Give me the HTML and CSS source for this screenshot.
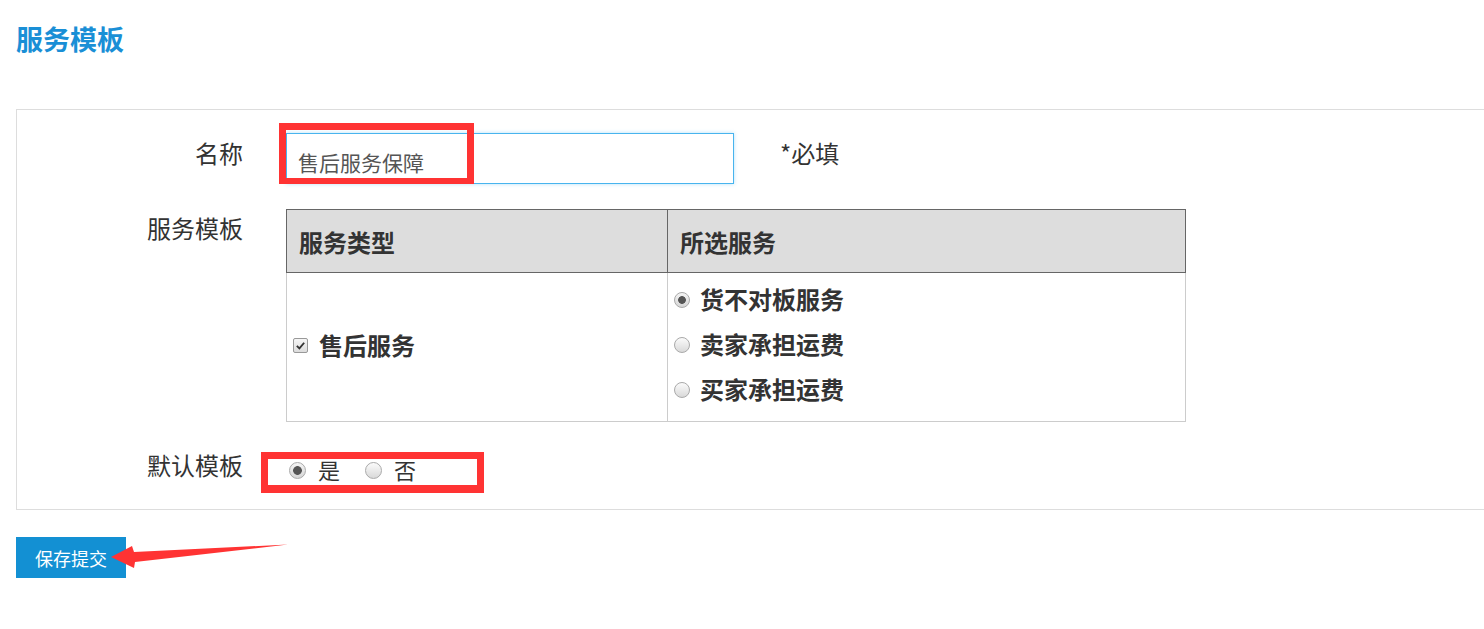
FILE: index.html
```html
<!DOCTYPE html>
<html lang="zh-CN">
<head>
    <meta charset="UTF-8">
    <meta name="viewport" content="width=device-width, initial-scale=1.0">
    <link rel="stylesheet" href="styles.css">
    <title>服务模板</title>
</head>
<body>
    <div class="page">
        <h2 class="page-title">服务模板</h2>

        <div class="panel">
            <!-- 名称 -->
            <div class="form-row row-name">
                <label class="form-label" for="tpl-name">名称</label>
                <div class="form-field">
                    <span class="input-wrap">
                        <input type="text" id="tpl-name" class="text-input" value="售后服务保障">
                        <span class="mark mark-input"></span>
                    </span>
                    <span class="required">*必填</span>
                </div>
            </div>

            <!-- 服务模板 -->
            <div class="form-row row-table">
                <label class="form-label">服务模板</label>
                <div class="form-field">
                    <table class="service-table">
                        <thead>
                            <tr>
                                <th class="col-type">服务类型</th>
                                <th class="col-select">所选服务</th>
                            </tr>
                        </thead>
                        <tbody>
                            <tr>
                                <td class="type-cell">
                                    <span class="check-line">
                                        <span class="checkbox checked">
                                            <svg viewBox="0 0 12 12" width="11" height="11"><path d="M2 6.5 L4.8 9.2 L10 3" fill="none" stroke="#333" stroke-width="2"/></svg>
                                        </span>
                                        售后服务
                                    </span>
                                </td>
                                <td class="select-cell">
                                    <div class="option"><span class="radio checked"></span>货不对板服务</div>
                                    <div class="option"><span class="radio"></span>卖家承担运费</div>
                                    <div class="option"><span class="radio"></span>买家承担运费</div>
                                </td>
                            </tr>
                        </tbody>
                    </table>
                </div>
            </div>

            <!-- 默认模板 -->
            <div class="form-row row-default">
                <label class="form-label">默认模板</label>
                <div class="form-field">
                    <div class="default-group">
                        <span class="radio radio-lg checked"></span><span class="radio-text">是</span>
                        <span class="radio radio-lg no-radio"></span><span class="radio-text">否</span>
                    </div>
                </div>
            </div>
        </div>

        <div class="actions">
            <button class="btn-submit">保存提交</button>
            <svg class="arrow" width="300" height="45" viewBox="0 0 300 45">
                <polygon points="95,20 116,9 118,15 272,7.5 119,25 118,31" fill="#f33"/>
            </svg>
        </div>
    </div>
</body>
</html>
```

FILE: styles.css
```css
/* Global */
body {
    margin: 0;
    font-family: "Microsoft YaHei", "Noto Sans CJK SC", sans-serif;
    color: #333;
    background-color: #fff;
}

.page {
    padding-left: 16px;
}

.page-title {
    margin: 0;
    padding-top: 19px;
    font-size: 27px;
    line-height: 40px;
    font-weight: bold;
    color: #1a8fd6;
}

/* Panel */
.panel {
    margin-top: 50px;
    border: 1px solid #ddd;
    border-right: none;
    padding: 23px 0 16px;
}

.form-row {
    display: flex;
    column-gap: 43px;
}

.form-row + .form-row {
    margin-top: 25px;
}

.form-row.row-default {
    margin-top: 30px;
}

.form-label {
    width: 226px;
    flex-shrink: 0;
    text-align: right;
    font-size: 24px;
    line-height: 30px;
    padding-top: 4px;
}

.row-name .form-label {
    padding-top: 5px;
}

.row-default .form-label {
    padding-top: 0;
    margin-top: -2px;
}

.form-field {
    display: flex;
    align-items: flex-start;
}

/* Name input */
.input-wrap {
    position: relative;
    display: block;
}

.text-input {
    display: block;
    width: 448px;
    height: 51px;
    box-sizing: border-box;
    padding: 6px 11px 0;
    font-family: inherit;
    font-size: 21px;
    color: #555;
    border: 1px solid #48b4ee;
    box-shadow: 0 0 4px rgba(72, 180, 238, 0.4);
    outline: none;
}

.mark {
    position: absolute;
    box-sizing: border-box;
    border: 7px solid #f33;
    border-bottom-width: 6px;
}

.mark-input {
    left: -7px;
    top: -10px;
    width: 195px;
    height: 61px;
}

.required {
    margin-left: 46px;
    padding-top: 5px;
    font-size: 24px;
    line-height: 30px;
}

/* Service table */
.service-table {
    width: 900px;
    border-collapse: collapse;
    font-size: 24px;
    font-weight: bold;
}

.service-table th {
    height: 62px;
    padding: 0 12px;
    text-align: left;
    background-color: #ddd;
    border: 1px solid #666;
}

.service-table .col-type {
    width: 356px;
}

.service-table td {
    border: 1px solid #ccc;
    vertical-align: middle;
}

.type-cell {
    padding: 0 6px 6px;
}

.check-line {
    display: flex;
    align-items: center;
    gap: 11px;
}

.checkbox {
    display: inline-flex;
    align-items: center;
    justify-content: center;
    width: 15px;
    height: 15px;
    margin-top: 3px;
    box-sizing: border-box;
    border: 1px solid #999;
    border-radius: 2px;
    background: linear-gradient(#f6f6f6, #dcdcdc);
}

.select-cell {
    padding: 3px 6px 10px;
}

.option {
    display: flex;
    align-items: center;
    gap: 10px;
    line-height: 45px;
}

.radio {
    display: inline-block;
    flex-shrink: 0;
    width: 16px;
    height: 16px;
    margin-top: 2px;
    box-sizing: border-box;
    border: 1px solid #aaa;
    border-radius: 50%;
    background: linear-gradient(#fbfbfb, #d9d9d9);
}

.radio.checked {
    background: radial-gradient(circle, #555 0 3.5px, transparent 4.2px), linear-gradient(#f4f4f4, #d6d6d6);
}

/* Default group */
.default-group {
    display: flex;
    align-items: center;
    margin-left: -25px;
    width: 223px;
    height: 41px;
    box-sizing: border-box;
    border: 7px solid #f33;
    border-bottom-width: 8px;
    padding: 0 0 6px 21px;
    font-size: 22px;
}

.radio-lg {
    width: 17px;
    height: 17px;
}

.radio-lg.checked {
    background: radial-gradient(circle, #555 0 4px, transparent 4.7px), linear-gradient(#f4f4f4, #d6d6d6);
}

.radio-text {
    margin-left: 12px;
}

.no-radio {
    margin-left: 25px;
}

/* Actions */
.actions {
    position: relative;
    margin-top: 27px;
}

.btn-submit {
    display: block;
    width: 110px;
    height: 41px;
    padding: 0;
    border: none;
    font-family: inherit;
    font-size: 18px;
    color: #fff;
    background-color: #1390d3;
    cursor: pointer;
}

.arrow {
    position: absolute;
    left: 0;
    top: 0;
}
```
